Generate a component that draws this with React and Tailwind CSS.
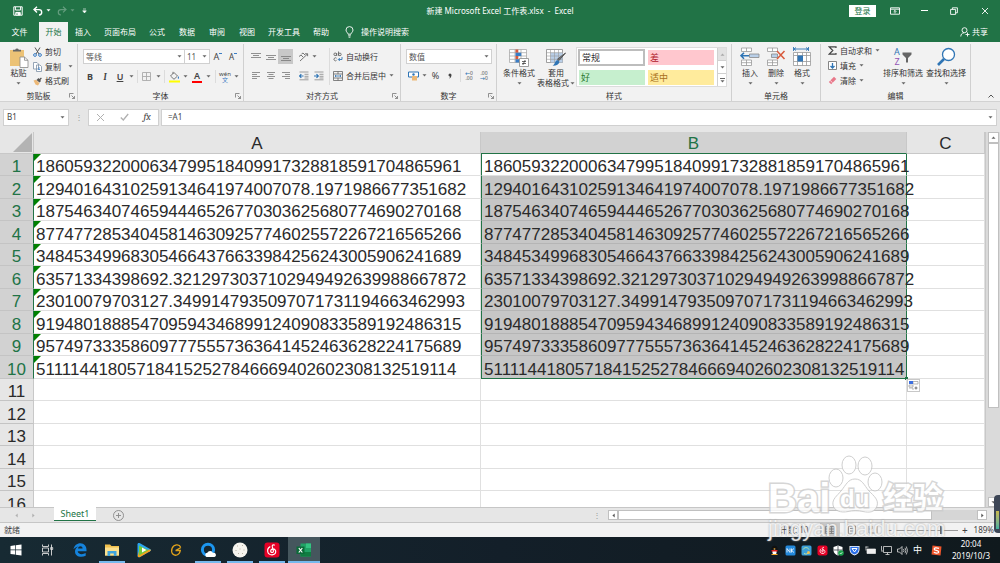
// ==============================
// File: src/App.jsx
// Role: 스프레드시트 창 (리본 / 수식 입력줄 / 시트 / 작업 표시줄)
// ==============================

const TABS = ["插入", "页面布局", "公式", "数据", "审阅", "视图", "开发工具", "帮助"];

const VALUES = [
  "186059322000634799518409917328818591704865961",
  "12940164310259134641974007078.1971986677351682",
  "187546340746594446526770303625680774690270168",
  "877477285340458146309257746025572267216565266",
  "348453499683054664376633984256243005906241689",
  "63571334398692.3212973037102949492639988667872",
  "23010079703127.3499147935097071731194663462993",
  "919480188854709594346899124090833589192486315",
  "957497333586097775557363641452463628224175689",
  "511114418057184152527846669402602308132519114",
];

const ROWS = Array.from({ length: 16 }, (_, i) => ({ n: i + 1, v: VALUES[i] }));

// ---------- 공통 ----------
function Caret({ className = "text-[#666]" }) {
  return (
    <svg width="5" height="3" viewBox="0 0 5 3" className={`shrink-0 ${className}`} aria-hidden="true">
      <path d="M0.5 0.3h4L2.5 2.6z" fill="currentColor" />
    </svg>
  );
}

function Group({ label, className = "", launcher = false, children }) {
  return (
    <section className={`flex h-[57px] shrink-0 flex-col border-r border-[#d0d0d0] ${className}`} aria-label={label}>
      <div className="flex h-[46px]">{children}</div>
      <div className="relative h-[11px] text-center leading-[11px]">
        {label}
        {launcher && (
          <button aria-label={`${label}设置`} className="absolute right-[2px] top-[3px]">
            <svg width="6" height="6" viewBox="0 0 6 6" fill="none" stroke="#777" strokeWidth="0.8" className="block">
              <path d="M0.5 4.5v-4h4M2.5 2.5l3 3M5.5 3v2.5H3" />
            </svg>
          </button>
        )}
      </div>
    </section>
  );
}

function Select({ label, value, className = "" }) {
  return (
    <span className={`relative flex h-[15px] items-center border border-[#d0d0d0] bg-white ${className}`}>
      <select aria-label={label} className="h-full w-full appearance-none bg-transparent pl-[2px] text-[8px] text-[#555] outline-none">
        <option>{value}</option>
      </select>
      <Caret className="pointer-events-none absolute right-[2px] text-[#666]" />
    </span>
  );
}

function BigButton({ icon, lines, className = "" }) {
  return (
    <button className={`flex shrink-0 flex-col items-center pt-[2px] ${className}`}>
      <span className="flex h-[22px] items-center">{icon}</span>
      <span className="h-[10px] whitespace-nowrap leading-[10px]">{lines[0]}</span>
      <span className="flex h-[10px] items-center gap-px whitespace-nowrap leading-[10px]">
        {lines[1]}
        <Caret />
      </span>
    </button>
  );
}

function Tool({ label, children, className = "w-[15px]" }) {
  return (
    <button aria-label={label} className={`flex h-[15px] shrink-0 items-center justify-center ${className}`}>
      {children}
    </button>
  );
}

function Divider({ className = "h-[13px]" }) {
  return <span className={`w-px shrink-0 bg-[#dcdcdc] ${className}`} />;
}

function Lines({ d }) {
  return (
    <svg width="10" height="10" viewBox="0 0 10 10" fill="none" stroke="#777" strokeWidth="0.8" aria-hidden="true">
      <path d={d} />
    </svg>
  );
}

// ---------- 제목 표시줄 + 탭 ----------
function TitleBar() {
  return (
    <header className="relative flex h-[21px] items-center justify-between pl-[13px] pr-[8px] text-white">
      <div className="flex items-center">
        <button aria-label="保存" className="w-[20px]">
          <svg width="10" height="10" viewBox="0 0 10 10" fill="none" stroke="white">
            <path d="M0.8 0.8h8.4v8.4H0.8zM2.4 1v3h5.2V1" />
            <path d="M2.8 9V6.4h4.4V9z" fill="white" />
            <path d="M4 7.4v1.4" stroke="#217346" />
          </svg>
        </button>
        <button aria-label="撤消" className="flex w-[24px] items-center gap-[3px]">
          <svg width="10" height="10" viewBox="0 0 10 10" fill="none" stroke="white" strokeWidth="1.4">
            <path d="M4 0.8L1 3.6L4 6.4M1.2 3.6H6a2.6 2.6 0 0 1 0 5.4" />
          </svg>
          <Caret className="text-white" />
        </button>
        <button aria-label="恢复" className="flex w-[25px] items-center gap-[3px] opacity-30">
          <svg width="10" height="10" viewBox="0 0 10 10" fill="none" stroke="white" strokeWidth="1.2">
            <path d="M6 0.8l3 2.8l-3 2.8M8.8 3.6H4a2.6 2.6 0 0 0 0 5.4" />
          </svg>
          <Caret className="text-white" />
        </button>
        <button aria-label="自定义快速访问工具栏">
          <svg width="5" height="6" viewBox="0 0 5 6" className="block">
            <path d="M1 1h3M0.7 2.8h3.6L2.5 5z" fill="white" stroke="white" strokeWidth="0.6" />
          </svg>
        </button>
      </div>
      <h1 className="pointer-events-none absolute inset-x-0 text-center">新建 Microsoft Excel 工作表.xlsx&nbsp; -&nbsp; Excel</h1>
      <div className="flex items-center">
        <button className="mr-[14px] h-[12px] w-[27px] bg-white leading-[12px] text-[#217346]">登录</button>
        <button aria-label="功能区显示选项" className="mr-[21px]">
          <svg width="10" height="8" viewBox="0 0 10 8" fill="none" stroke="white" strokeWidth="0.9" className="block">
            <path d="M0.5 0.8h9v6.4h-9zM0.5 2.2h9M5 6.4V3.6M3.7 4.7L5 3.4l1.3 1.3" />
          </svg>
        </button>
        <button aria-label="最小化" className="mr-[22px] h-px w-[7px] bg-white" />
        <button aria-label="还原" className="mr-[23px]">
          <svg width="8" height="8" viewBox="0 0 8 8" fill="none" stroke="white" strokeWidth="0.9" className="block">
            <path d="M0.6 2.4h5v5h-5zM2.4 2.4V0.8h5v5H5.6" />
          </svg>
        </button>
        <button aria-label="关闭" className="mr-[3px]">
          <svg width="8" height="8" viewBox="0 0 8 8" stroke="white" strokeWidth="0.9" className="block">
            <path d="M1 1l6 6M7 1L1 7" />
          </svg>
        </button>
      </div>
    </header>
  );
}

function TabBar() {
  return (
    <nav className="flex h-[21px] items-stretch text-white">
      <button className="w-[39px]">文件</button>
      <button className="mt-px w-[29px] bg-[#f2f2f2] text-[#217346]">开始</button>
      {TABS.map((t) => (
        <button key={t} className={t.length > 2 ? "w-[44px]" : "w-[30px]"}>
          {t}
        </button>
      ))}
      <button className="flex items-center gap-[7px] pl-[9px]">
        <svg width="9" height="12" viewBox="0 0 9 12" fill="none" stroke="white" strokeWidth="0.9">
          <path d="M3 8.2C3 6.8 1 6 1 4a3.5 3.4 0 0 1 7 0c0 2-2 2.8-2 4.2zM3.2 9.8h2.6M3.6 11.2h1.8" />
        </svg>
        操作说明搜索
      </button>
      <button className="ml-auto mr-[12px] flex items-center gap-[2px]">
        <svg width="10" height="10" viewBox="0 0 10 10" fill="none" stroke="white" strokeWidth="0.9">
          <circle cx="4.5" cy="3.2" r="2.5" />
          <path d="M0.8 9.5C0.8 7.5 2 5.8 4.2 5.8M7.5 5.5v4M5.5 7.5h4" />
        </svg>
        共享
      </button>
    </nav>
  );
}

// ---------- 리본 ----------
function PasteIcon() {
  return (
    <svg width="20" height="21" viewBox="0 0 20 21">
      <path d="M1 3h14v16H1z" fill="#ecc276" />
      <path d="M4 4.500V2.800h2.200a1.900 1.900 0 0 1 3.600 0H12v1.700z" fill="#666" />
      <path d="M11 10h4.500l3.500 3.300V20.500H11z" fill="white" stroke="#888" strokeWidth="0.8" />
      <path d="M15.500 10v3.300H19" fill="none" stroke="#888" strokeWidth="0.8" />
    </svg>
  );
}

function ClipboardGroup() {
  return (
    <Group label="剪贴板" launcher className="w-[78px]">
      <BigButton icon={<PasteIcon />} lines={["粘贴", ""]} className="ml-[7px] w-[23px]" />
      <div className="ml-[3px] flex flex-col justify-between pb-[2px] pt-px">
        <button className="flex h-[14px] items-center gap-[3px]">
          <svg width="9" height="10" viewBox="0 0 9 10" fill="none">
            <path d="M2 0.5l4 6.500M7 0.5L3 7" stroke="#555" />
            <circle cx="2" cy="8" r="1.4" stroke="#3b7dc4" />
            <circle cx="7" cy="8" r="1.4" stroke="#3b7dc4" />
          </svg>
          剪切
        </button>
        <button className="flex h-[14px] items-center gap-[3px]">
          <svg width="9" height="10" viewBox="0 0 9 10" fill="white" stroke="#7c8fa5" strokeWidth="0.8">
            <path d="M0.5 0.5h3.500l1.500 1.500v5h-5zM3.500 3h3.500l1.500 1.500v5h-5z" />
            <path d="M5 6h2M5 7.500h2" stroke="#3b7dc4" />
          </svg>
          复制
          <span className="w-px" />
          <Caret />
        </button>
        <button className="flex h-[14px] items-center gap-[3px]">
          <svg width="9" height="9" viewBox="0 0 9 9">
            <path d="M0.5 3.500l2.500-.8 3.500 3.500-1.500 2.300-2.500-1z" fill="#ecb877" />
            <path d="M3.500 3l2-2 .8 1L8 .5l.8.9L7.300 3l.7 1-1.500 1.500z" fill="#555" />
          </svg>
          格式刷
        </button>
      </div>
    </Group>
  );
}

function FontGroup() {
  return (
    <Group label="字体" launcher className="w-[166px]">
      <div className="flex flex-col gap-[5px] pl-[5px] pt-[5px]">
        <div className="flex items-center">
          <Select label="字体" value="等线" className="w-[102px]" />
          <Select label="字号" value="11" className="w-[25px] border-l-0" />
          <Tool label="增大字号" className="w-[16px] text-[9px] text-[#444]">
            A<span className="mb-[6px] h-px w-[3px] bg-[#3b7dc4]" />
          </Tool>
          <Tool label="减小字号" className="w-[14px] text-[8px] text-[#444]">
            A<span className="mb-[6px] h-px w-[3px] bg-[#3b7dc4]" />
          </Tool>
        </div>
        <div className="flex items-center text-[9px] text-[#444]">
          <Tool label="加粗" className="w-[14px]"><b>B</b></Tool>
          <Tool label="倾斜" className="w-[16px]"><i className="font-serif font-bold">I</i></Tool>
          <Tool label="下划线" className="w-[14px]"><u className="font-semibold">U</u></Tool>
          <Tool label="下划线选项" className="w-[8px]"><Caret /></Tool>
          <span className="w-[2px]" />
          <Divider />
          <Tool label="边框" className="w-[17px]">
            <svg width="9" height="9" viewBox="0 0 9 9" fill="none" stroke="#aaa" strokeWidth="0.9">
              <path d="M0.5 0.5h8v8h-8zM4.500 0.5v8M0.5 4.500h8" />
            </svg>
          </Tool>
          <Tool label="边框选项" className="w-[7px]"><Caret /></Tool>
          <span className="w-[2px]" />
          <Divider />
          <Tool label="填充颜色" className="w-[18px]">
            <svg width="11" height="12" viewBox="0 0 11 12" fill="none">
              <path d="M5 1.500L1.500 5L5 8.300L8.500 5zM4 3V0.8" stroke="#777" />
              <path d="M9.300 5c1 1.500 1 2.500.2 2.700s-1-.8-.2-2.700z" fill="#3b7dc4" />
              <path d="M0 9.500h11v2H0z" fill="#ff0" />
            </svg>
          </Tool>
          <Tool label="填充颜色选项" className="w-[5px]"><Caret /></Tool>
          <Tool label="字体颜色" className="w-[18px]">
            <span className="h-[13px] w-[10px] border-b-2 border-[#f00] text-center font-semibold leading-[11px]">A</span>
          </Tool>
          <Tool label="字体颜色选项" className="w-[5px]"><Caret /></Tool>
          <span className="w-[4px]" />
          <Divider />
          <Tool label="显示拼音" className="w-[18px]">
            <span className="flex flex-col text-[6px] leading-[6px]">
              <span>wén</span>
              <span className="text-[#3b7dc4]">文</span>
            </span>
          </Tool>
          <Tool label="拼音选项" className="w-[5px]"><Caret /></Tool>
        </div>
      </div>
    </Group>
  );
}

function IndentIcon({ flip = false }) {
  return (
    <svg width="10" height="10" viewBox="0 0 10 10" fill="none">
      <path d="M0.5 1h9M5.500 3.300h4M5.500 5.300h4M0.5 8.800h9M5.500 7h4" stroke="#888" strokeWidth="0.8" />
      <path d={flip ? "M0 5h4M2.500 3.200L4.300 5L2.500 6.800" : "M0.500 5h4M2.300 3.200L0.500 5l1.800 1.800"} stroke="#2f75b5" strokeWidth="1.2" />
    </svg>
  );
}

function AlignGroup() {
  return (
    <Group label="对齐方式" launcher className="w-[157px]">
      <div className="flex flex-col gap-[4px] pl-[4px] pt-[5px]">
        <div className="flex items-center">
          <Tool label="顶端对齐"><Lines d="M0 1.500h10M2 3.500h6M0 5.500h10" /></Tool>
          <Tool label="垂直居中"><Lines d="M0 3.500h10M2 5.500h6M0 7.500h10" /></Tool>
          <Tool label="底端对齐" className="w-[15px] bg-[#c8c8c8]"><Lines d="M0 4.500h10M2 6.500h6M0 8.500h10" /></Tool>
          <span className="w-[3px]" />
          <Tool label="方向" className="w-[14px]">
            <svg width="11" height="10" viewBox="0 0 11 10" fill="none" stroke="#666" strokeWidth="0.9">
              <path d="M2 9L9.500 2M7 1.800h2.600v2.400M1 4.500l2-1.500 2 2M3.500 2l1.500-1 2 2" />
            </svg>
          </Tool>
          <Tool label="方向选项" className="w-[8px]"><Caret /></Tool>
        </div>
        <div className="flex items-center">
          <Tool label="左对齐"><Lines d="M1 1.500h8M1 3.500h5M1 5.500h8M1 7.500h5" /></Tool>
          <Tool label="居中"><Lines d="M1 1.500h8M2.500 3.500h5M1 5.500h8M2.500 7.500h5" /></Tool>
          <Tool label="右对齐"><Lines d="M1 1.500h8M4 3.500h5M1 5.500h8M4 7.500h5" /></Tool>
          <span className="w-[3px]" />
          <Tool label="减少缩进量"><IndentIcon /></Tool>
          <Tool label="增加缩进量"><IndentIcon flip /></Tool>
        </div>
      </div>
      <span className="w-[3px]" />
      <Divider className="mt-[4px] h-[37px]" />
      <div className="flex flex-col gap-[4px] whitespace-nowrap pl-[3px] pt-[5px]">
        <button className="flex h-[15px] items-center gap-[3px]">
          <svg width="10" height="11" viewBox="0 0 10 11" fill="none" stroke="#666" strokeWidth="0.9">
            <circle cx="2.2" cy="3.3" r="1.3" />
            <path d="M3.700 2v3M5.500 0.5v4.300" />
            <circle cx="6.9" cy="3.4" r="1.3" />
            <path d="M3.500 7.200a1.500 1.500 0 1 0 0 2.200" />
            <path d="M9 6v2.500H5.500M6.800 7L5.300 8.500l1.500 1.500" stroke="#2f75b5" />
          </svg>
          自动换行
        </button>
        <button className="flex h-[15px] items-center gap-[3px]">
          <svg width="10" height="10" viewBox="0 0 10 10" fill="none" stroke="#666" strokeWidth="0.8" className="shrink-0">
            <path d="M0.5 0.5h9v9h-9zM0.5 3h9M0.5 7h9M5 0.5V3M5 7v2.500" />
            <path d="M2 5h6M3 4L2 5l1 1M7 4l1 1-1 1" stroke="#2f75b5" />
          </svg>
          合并后居中
          <Caret />
        </button>
      </div>
    </Group>
  );
}

function NumberGroup() {
  return (
    <Group label="数字" launcher className="w-[96px]">
      <div className="flex flex-col gap-[4px] pl-[5px] pt-[5px]">
        <Select label="数字格式" value="数值" className="w-[86px]" />
        <div className="flex items-center">
          <Tool label="会计数字格式" className="w-[14px]">
            <svg width="11" height="10" viewBox="0 0 11 10">
              <path d="M0.5 1h10v5h-10z" fill="white" stroke="#2f75b5" />
              <circle cx="5.5" cy="3.5" r="1.2" fill="#2f75b5" />
              <path d="M4 5h5v4.500H4z" fill="#ecb877" />
            </svg>
          </Tool>
          <Tool label="会计选项" className="w-[8px]"><Caret /></Tool>
          <Tool label="百分比样式" className="w-[15px] text-[9px] text-[#444]">%</Tool>
          <Tool label="千位分隔样式" className="w-[14px]">
            <svg width="4" height="6" viewBox="0 0 4 6"><path d="M0.5 2a1.500 1.500 0 1 1 3 0c0 1.500-.8 3-2.300 3.700.6-1 .8-1.500.6-2.200C1 3.500.5 2.700.5 2z" fill="#444" /></svg>
          </Tool>
          <span className="w-[3px]" />
          <Divider />
          <Tool label="增加小数位数" className="w-[16px] flex-col text-[5px] text-[#555]">
            <span className="leading-[5px]"><b className="text-[#2f75b5]">←</b>0</span>
            <span className="leading-[5px]">.00</span>
          </Tool>
          <Tool label="减少小数位数" className="w-[14px] flex-col text-[5px] text-[#555]">
            <span className="leading-[5px]">.00</span>
            <span className="leading-[5px]"><b className="text-[#2f75b5]">→</b>0</span>
          </Tool>
        </div>
      </div>
    </Group>
  );
}

function StylesGroup() {
  return (
    <Group label="样式" className="w-[235px]">
      <BigButton
        className="ml-[5px] w-[34px]"
        lines={["条件格式", ""]}
        icon={
          <svg width="20" height="19" viewBox="0 0 20 19" fill="none">
            <path d="M0.5 1.500h17v13h-17zM0.5 4.700h17M0.5 8h17M0.5 11.300h17M6 1.500v13M12 1.500v13" fill="white" stroke="#aaa" strokeWidth="0.8" />
            <path d="M6.500 1.500h2.800v3.200H6.500zM6.500 8h2.800v3.300H6.500z" fill="#d8593b" />
            <path d="M6.500 4.700h5.800V8H6.500zM6.500 11.300h3.800v3.200H6.500z" fill="#3b7dc4" />
            <path d="M10.500 10.500h9v8h-9z" fill="white" stroke="#888" strokeWidth="0.8" />
            <path d="M13 13.500h4M13 15.500h4M16.200 12l-2.400 5" stroke="#444" strokeWidth="0.8" />
          </svg>
        }
      />
      <BigButton
        className="w-[40px]"
        lines={["套用", "表格格式"]}
        icon={
          <svg width="20" height="19" viewBox="0 0 20 19" fill="none">
            <path d="M0.5 1.500h16v13h-16z" fill="white" stroke="#888" strokeWidth="0.8" />
            <path d="M4.500 4.700h12v9.800h-12z" fill="#b9cfe8" />
            <path d="M0.5 4.700h16M0.5 8h16M0.5 11.300h16M4.500 1.500v13M8.500 1.500v13M12.500 1.500v13" stroke="#999" strokeWidth="0.6" />
            <path d="M19.500 5L13 12.500l-1.500-1.300z" stroke="#555" fill="#777" />
            <path d="M11.500 12l2 1.800c-.6 3.200-3.500 4.200-7 4 2.500-1 2.200-5 5-5.800z" fill="#2f75b5" />
          </svg>
        }
      />
      <div className="mt-[3px] flex h-[40px] border border-[#dcdcdc] bg-white">
        <div className="grid grid-cols-2 gap-x-[3px] gap-y-[4px] p-px text-left text-[9px] leading-[15px]">
          <button className="h-[17px] w-[67px] border-2 border-[#bdbdbd] pl-[2px] text-left leading-[13px] text-[#333]">常规</button>
          <button className="h-[15px] w-[66px] self-center bg-[#ffc7ce] pl-[2px] text-left text-[#b0202c]">差</button>
          <button className="ml-px h-[15px] w-[66px] bg-[#c6efce] pl-[2px] text-left text-[#2a7a2e]">好</button>
          <button className="h-[15px] w-[66px] bg-[#ffeb9c] pl-[2px] text-left text-[#a8701a]">适中</button>
        </div>
        <div className="ml-px flex w-[9px] flex-col divide-y divide-[#d0d0d0] border-l border-[#d0d0d0]">
          <button aria-label="上一行" className="flex flex-1 items-center justify-center bg-[#e2e2e2]"><Caret className="rotate-180 text-[#aaa]" /></button>
          <button aria-label="下一行" className="flex flex-1 items-center justify-center"><Caret /></button>
          <button aria-label="其他" className="flex flex-1 flex-col items-center justify-center gap-px"><span className="h-px w-[5px] bg-[#666]" /><Caret /></button>
        </div>
      </div>
    </Group>
  );
}

function CellsGroup() {
  const grid = "M1.500 1h10v3.500h-10zM1.500 13h10v5.500h-10zM6.500 1v3.500M6.500 13v5.500M1.500 15.700h10";
  return (
    <Group label="单元格" className="w-[89px]">
      <BigButton
        className="ml-[5px] w-[26px]"
        lines={["插入", ""]}
        icon={
          <svg width="20" height="20" viewBox="0 0 20 20" fill="none">
            <path d={grid} fill="white" stroke="#999" strokeWidth="0.8" />
            <path d="M9.500 7h9.500v3.500H9.500z" fill="#b9cfe8" stroke="#888" strokeWidth="0.8" />
            <path d="M1 8.700h8M4 5.700L1 8.700l3 3" stroke="#2f75b5" strokeWidth="1.6" />
          </svg>
        }
      />
      <BigButton
        className="w-[26px]"
        lines={["删除", ""]}
        icon={
          <svg width="20" height="20" viewBox="0 0 20 20" fill="none">
            <path d={grid} fill="white" stroke="#999" strokeWidth="0.8" />
            <path d="M5.500 7h6v3.500h-6z" fill="#b9cfe8" stroke="#888" strokeWidth="0.8" />
            <path d="M11 4l7.500 8M18.500 4L11 12" stroke="#d8593b" strokeWidth="1.5" />
          </svg>
        }
      />
      <BigButton
        className="w-[26px]"
        lines={["格式", ""]}
        icon={
          <svg width="20" height="20" viewBox="0 0 20 20" fill="none">
            <path d="M1.500 2h15M1.500 0v4M16.500 0v4M4 0.5L2 2l2 1.500M14 0.5L16 2l-2 1.500" stroke="#2f75b5" strokeWidth="0.9" />
            <path d="M1.500 5.500h17v13h-17zM1.500 8.500h17M1.500 14.500h17M5.500 5.500v13M10.500 5.500v13M14.500 5.500v13" fill="white" stroke="#999" strokeWidth="0.8" />
            <path d="M5.500 8.500h5.500v6H5.500z" fill="#2f75b5" />
          </svg>
        }
      />
    </Group>
  );
}

function EditGroup() {
  return (
    <Group label="编辑" className="w-[150px]">
      <div className="flex w-[59px] shrink-0 flex-col justify-between pb-[3px] pl-[7px] whitespace-nowrap">
        <button className="flex h-[13px] items-center gap-[3px]">
          <svg width="9" height="9" viewBox="0 0 9 9" fill="none" stroke="#444" strokeWidth="1.2" className="shrink-0">
            <path d="M8 2V0.8H1.200L4.800 4.500L1.200 8.200H8V7" />
          </svg>
          自动求和
          <Caret />
        </button>
        <button className="flex h-[13px] items-center gap-[3px]">
          <svg width="9" height="9" viewBox="0 0 9 9" fill="none">
            <path d="M0.5 0.5h8v8h-8z" fill="white" stroke="#777" strokeWidth="0.9" />
            <path d="M4.500 2v5M2.500 5l2 2 2-2" stroke="#2f75b5" strokeWidth="1.3" />
          </svg>
          填充
          <Caret />
        </button>
        <button className="flex h-[13px] items-center gap-[3px]">
          <svg width="9" height="9" viewBox="0 0 9 9">
            <path d="M6 0.8L8.300 3L3.200 8.200L0.8 6z" fill="#e8788a" />
            <path d="M2.200 4.500l2.400 2.300" stroke="white" strokeWidth="0.7" />
          </svg>
          清除
          <Caret />
        </button>
      </div>
      <BigButton
        className="w-[46px]"
        lines={["排序和筛选", ""]}
        icon={
          <span className="flex items-center gap-[2px]">
            <span className="flex flex-col text-[9px] leading-[10px]">
              <span className="h-[10px] text-[#2f75b5]">A</span>
              <span className="h-[10px] text-[#9254b5]">Z</span>
            </span>
            <svg width="10" height="11" viewBox="0 0 10 11"><path d="M0.5 0.5h9v2L6 6v4.500H4V6L0.5 2.500z" fill="#666" /></svg>
          </span>
        }
      />
      <BigButton
        className="w-[40px]"
        lines={["查找和选择", ""]}
        icon={
          <svg width="20" height="20" viewBox="0 0 20 20" fill="none" stroke="#2f75b5">
            <circle cx="12.5" cy="7.5" r="6" strokeWidth="1.3" fill="white" />
            <path d="M8 12L2 18" strokeWidth="2.6" />
          </svg>
        }
      />
    </Group>
  );
}

function Ribbon() {
  return (
    <div className="flex h-[60px] border-b border-[#d2d2d2] bg-[#f2f2f2] pt-[2px] text-[#333]">
      <ClipboardGroup />
      <FontGroup />
      <AlignGroup />
      <NumberGroup />
      <StylesGroup />
      <CellsGroup />
      <EditGroup />
      <button aria-label="折叠功能区" className="ml-auto mr-[6px] mt-[49px] h-[6px]">
        <svg width="6" height="4" viewBox="0 0 6 4" fill="none" stroke="#555" className="block"><path d="M0.5 3.500L3 1l2.500 2.500" /></svg>
      </button>
    </div>
  );
}

function FormulaBar() {
  return (
    <div className="flex h-[30px] items-center pl-[3px] text-[#444]">
      <div className="flex h-[17px] w-[66px] items-center border border-[#d0d0d0] bg-white">
        <input aria-label="名称框" defaultValue="B1" className="w-[56px] bg-transparent pl-[3px] text-[8px] outline-none" />
        <Caret />
      </div>
      <span className="w-[19px] text-center text-[#999]">⋮</span>
      <div className="flex h-[17px] w-[71px] items-center justify-around border border-[#d0d0d0] bg-white">
        <button aria-label="取消">
          <svg width="9" height="9" viewBox="0 0 9 9" stroke="#b0b0b0" className="block"><path d="M1 1l7 7M8 1L1 8" /></svg>
        </button>
        <button aria-label="输入">
          <svg width="9" height="8" viewBox="0 0 9 8" fill="none" stroke="#b0b0b0" strokeWidth="1.3" className="block"><path d="M0.8 4.500L3.300 7L8.200 1" /></svg>
        </button>
        <button aria-label="插入函数" className="font-serif text-[10px] italic leading-[12px]">fx</button>
      </div>
      <div className="ml-[2px] flex h-[17px] flex-1 items-center border border-[#d0d0d0] bg-white pr-[3px]">
        <input aria-label="编辑栏" defaultValue="=A1" className="flex-1 bg-transparent pl-[6px] text-[8px] outline-none" />
        <Caret />
      </div>
      <span className="w-[3px]" />
    </div>
  );
}

// ---------- 시트 ----------
function Sheet() {
  return (
    <main className="flex min-h-0 flex-1 overflow-hidden">
      <div className="min-w-0 flex-1 overflow-hidden bg-white font-['Liberation_Sans','Noto_Sans_CJK_SC',sans-serif] text-[17px] text-[#2a2a2a]">
        <table className="w-full table-fixed border-separate border-spacing-0">
          <colgroup>
            <col className="w-[34px]" />
            <col className="w-[447px]" />
            <col className="w-[426px]" />
            <col />
          </colgroup>
          <thead>
            <tr className="h-[22px] bg-[#e6e6e6] leading-[18px]">
              <th className="border-b border-r border-[#c8c8c8] p-0" aria-label="全选">
                <svg width="20" height="19" viewBox="0 0 20 19" className="ml-auto block"><path d="M19 0v19H0z" fill="#b3b3b3" /></svg>
              </th>
              <th className="border-b border-r border-[#c8c8c8] p-0 pt-[3px] font-normal">A</th>
              <th className="border-b border-r border-b-[#217346] border-r-[#c8c8c8] bg-[#d2d2d2] p-0 pt-[3px] font-normal text-[#217346]">B</th>
              <th className="border-b border-r border-[#c8c8c8] p-0 pt-[3px] font-normal">C</th>
            </tr>
          </thead>
          <tbody>
            {ROWS.map(({ n, v }) => {
              const picked = n <= 10;
              return (
                <tr key={n} className="leading-[17px] odd:h-[22px] even:h-[23px]">
                  <th
                    scope="row"
                    className={`border-b border-r border-b-[#c4c4c4] p-0 pt-[4px] font-normal ${
                      picked ? "border-r-[#217346] bg-[#d2d2d2] text-[#217346]" : "border-r-[#c8c8c8] bg-[#e6e6e6]"
                    }`}
                  >
                    {n}
                  </th>
                  <td className="relative whitespace-nowrap border-b border-r border-[#e0e0e0] p-0 pl-[2px] pt-[4px]">
                    {v && (
                      <svg width="7" height="7" viewBox="0 0 7 7" className="absolute left-0 top-0"><path d="M0 0h7L0 7z" fill="#008000" /></svg>
                    )}
                    {v}
                  </td>
                  <td
                    className={`relative whitespace-nowrap border-b border-r p-0 pl-[2px] pt-[4px] ${
                      picked ? "border-l border-l-[#217346] border-r-[#217346]" : "border-r-[#e0e0e0]"
                    } ${n === 10 ? "border-b-[#217346]" : n > 1 && picked ? "border-b-[#b5b5b5]" : "border-b-[#e0e0e0]"} ${
                      picked && n > 1 ? "bg-[#c6c6c6]" : ""
                    }`}
                  >
                    {v}
                    {n === 10 && (
                      <>
                        <span className="absolute -bottom-[2px] -right-[2px] size-[3px] bg-[#217346]" />
                        <button aria-label="自动填充选项" className="absolute -right-[14px] top-[23px] flex size-[13px] items-center justify-center border border-[#c8c8c8] bg-white">
                          <svg width="11" height="11" viewBox="0 0 11 11" fill="none" stroke="#999" strokeWidth="0.7">
                            <path d="M5 1.500h5v2.500H5zM1 5h4v2H1zM1 8h4v2" />
                            <path d="M1 1h4v3H1z" fill="#3c6fe0" stroke="none" />
                            <path d="M8 6.500v3M6.500 8h3" stroke="#444" />
                          </svg>
                        </button>
                      </>
                    )}
                  </td>
                  <td className="border-b border-r border-[#e0e0e0] p-0" />
                </tr>
              );
            })}
          </tbody>
        </table>
      </div>
      {/* 세로 스크롤바 */}
      <div className="flex w-[15px] flex-col border-l border-[#c8c8c8] bg-[#dadada] pl-[2px] pr-px">
        <button aria-label="向上滚动" className="flex h-[11px] items-center justify-center border border-[#c0c0c0] bg-white"><Caret className="rotate-180 text-[#666]" /></button>
        <div className="h-[265px] border border-[#c0c0c0] bg-white" />
        <button aria-label="向下滚动" className="mt-auto flex h-[10px] items-center justify-center border border-[#c0c0c0] bg-white"><Caret /></button>
      </div>
    </main>
  );
}

function SheetTabs() {
  return (
    <div className="flex h-[16px] border-y border-[#c6c6c6] bg-[#e6e6e6]">
      <div className="flex w-[54px] items-center gap-[12px] pl-[14px] text-[#b0b0b0]">
        <button aria-label="上一个工作表"><Caret className="rotate-90" /></button>
        <button aria-label="下一个工作表"><Caret className="-rotate-90" /></button>
      </div>
      <button className="-mt-px h-[14px] w-[42px] border-b border-[#217346] bg-white text-[9px] leading-[12px] text-[#217346]">Sheet1</button>
      <button aria-label="新工作表" className="ml-[17px]">
        <svg width="11" height="11" viewBox="0 0 11 11" fill="none" stroke="#888" strokeWidth="0.9"><circle cx="5.5" cy="5.5" r="5" /><path d="M5.500 3v5M3 5.500h5" /></svg>
      </button>
      <span className="ml-auto leading-[14px] text-[#999]">⋮</span>
      <div className="ml-[7px] mt-[2px] flex h-[10px] w-[379px] bg-[#d6d6d6]">
        <button aria-label="向左滚动" className="flex w-[10px] items-center justify-center border border-[#c0c0c0] bg-white"><Caret className="rotate-90 text-[#555]" /></button>
        <div className="w-[314px] border border-[#c0c0c0] bg-white" />
        <button aria-label="向右滚动" className="ml-auto flex w-[10px] items-center justify-center border border-[#c0c0c0] bg-white"><Caret className="-rotate-90 text-[#555]" /></button>
      </div>
      <span className="w-[13px]" />
    </div>
  );
}

function StatusBar() {
  return (
    <footer className="flex h-[14px] items-center bg-[#f2f2f2] pl-[4px] pr-[6px] text-[#444]">
      <span>就绪</span>
      <span className="ml-auto mr-[12px]">计数: 10</span>
      <button aria-label="普通" className="flex h-full w-[20px] items-center justify-center bg-[#c8c8c8]"><Lines d="M0.5 1.500h9v7h-9zM0.5 4h9M0.5 6.500h9M3.500 1.500v7M6.500 1.500v7" /></button>
      <button aria-label="页面布局" className="flex w-[23px] justify-center"><Lines d="M1.500 1h7v8h-7zM3 3.500h4M3 6h4" /></button>
      <button aria-label="分页预览" className="mr-[4px] flex w-[20px] justify-center"><Lines d="M1 1v7h8V1M1 4h3V1" /></button>
      <span>−</span>
      <input
        type="range"
        aria-label="缩放"
        defaultValue="75"
        className="mx-[4px] h-px w-[62px] appearance-none bg-[#999] [&::-webkit-slider-thumb]:h-[8px] [&::-webkit-slider-thumb]:w-[3px] [&::-webkit-slider-thumb]:appearance-none [&::-webkit-slider-thumb]:bg-[#666]"
      />
      <span className="mr-[6px] text-[10px]">+</span>
      <span>189%</span>
    </footer>
  );
}

// ---------- 작업 표시줄 ----------
const APPS = [
  {
    name: "开始菜单",
    icon: <path d="M2.500 4l4.500-.7V7.600H2.500zM7.700 3.200L13.500 2.400v5.200H7.700zM2.500 8.300H7v4.300l-4.500-.7zM7.700 8.300h5.800v5.200L7.700 12.700z" fill="white" />,
  },
  {
    name: "任务视图",
    icon: <path d="M2.500 2.500v2h6v-2M2.500 13.500v-2h6v2M2.500 6h6v4h-6zM11.500 2.500v11M10.700 5.500h2v2h-2z" fill="none" stroke="#ddd" strokeWidth="0.9" />,
  },
  {
    name: "Edge",
    icon: <path d="M1.500 7.300C2.200 3.500 5 1.300 8.300 1.300c4 0 6.200 3 6.200 6.700v1.300H5.700c.2 3 4.800 3.700 8 1.700v2.800c-4.400 2.200-10.700 1-10.700-4.400 0-2.300 1.200-4 3.200-5C3.800 5 2.500 6 1.500 7.300zM6 6.500h4.600c0-3-4.200-3-4.600 0z" fill="#1583dc" />,
  },
  {
    name: "文件资源管理器",
    open: true,
    icon: (
      <>
        <path d="M1 2.500h5l1.500 1.500H15v9.500H1z" fill="#f0c04e" />
        <path d="M1 5.500h14v8H1z" fill="#fce08e" />
        <path d="M3.500 14V9h9v5h-2.700v-2.500H6.200V14z" fill="#3fa3dc" />
      </>
    ),
  },
  {
    name: "腾讯视频",
    icon: (
      <>
        <path d="M1.500 2.500C1.500 1 2.500.5 4 1.300L14 7c1.300.8 1.300 1.500 0 2.300L4 15c-1.500.7-2.500 0-2.500-1.500z" fill="#2ba5ee" />
        <path d="M3 9L14.500 7.500c.5.7.3 1.200-.5 1.800L4 15c-1 .5-2 .2-2.300-.7z" fill="#f9a01b" />
        <path d="M3 3.500L12.500 8.200L3 13.500z" fill="#73cb3b" />
        <path d="M6 5.500L10.500 8L6 10.500z" fill="white" />
      </>
    ),
  },
  {
    name: "加速器",
    icon: <path d="M12.500 5C11.500 2 5.500 2 4 6.500c-1.500 5 2 7.500 5 6.500 2.300-.7 3-2.500 3.300-4.500H7.500M7.500 8.500L13 5.500" fill="none" stroke="#e2a31b" strokeWidth="1.3" />,
  },
  {
    name: "QQ浏览器",
    open: true,
    icon: (
      <>
        <circle cx="8" cy="7.8" r="5.6" fill="none" stroke="#1c96f0" strokeWidth="3" />
        <path d="M6.500 15a2.300 2.300 0 0 1 .8-4.300 3.200 3.200 0 0 1 5.700.3 2 2 0 0 1 1.500 4z" fill="white" />
      </>
    ),
  },
  {
    name: "曲奇",
    open: true,
    icon: (
      <>
        <circle cx="8" cy="8" r="7.5" fill="#f6f4ee" />
        <path d="M5 4h1M10 3.500h1M7.500 7h1M3.500 8.500h1M11.500 8h1M6 11.500h1M10 11.500h1" stroke="#b9b3a2" />
      </>
    ),
  },
  {
    name: "网易云音乐",
    open: true,
    icon: (
      <>
        <rect x="0.5" y="0.5" width="15" height="15" rx="3" fill="#e60026" />
        <path d="M10.800 3.200c-1.800-1-2.800.2-2.500 1.500l1.100 4.200c.3 2-2.700 2.200-2.700.2 0-1.400 1-2.200 2.400-2.200 3.400 0 3.900 5.600-1 5.900-5.300.2-5.800-6.300-1.800-8.200" fill="none" stroke="white" strokeWidth="1.200" />
      </>
    ),
  },
  {
    name: "Excel",
    open: true,
    active: true,
    icon: (
      <>
        <path d="M4.500 1.500H15v13H4.500z" fill="#21a366" />
        <path d="M10 1.500h5v4.500h-5z" fill="#33c481" />
        <path d="M4.500 10H15v4.500H4.500z" fill="#107c41" />
        <path d="M0.5 4.500h8v7.500h-8z" fill="#0b6b38" />
        <path d="M2.800 6l3.500 4.500M6.300 6l-3.500 4.500" stroke="white" strokeWidth="1.2" />
      </>
    ),
  },
];

const TRAY = [
  {
    name: "QQ",
    icon: (
      <>
        <ellipse cx="5.5" cy="5" rx="3.2" ry="4.2" fill="#111" />
        <ellipse cx="5.5" cy="7" rx="2.2" ry="2.6" fill="white" />
        <path d="M2.500 5h6v1.500h-6z" fill="#e02020" />
        <path d="M2.500 9.500h6M4.700 3.800h1.600" stroke="#f5a623" />
      </>
    ),
  },
  {
    name: "NK",
    icon: (
      <>
        <rect x="0.5" y="0.5" width="10" height="10" rx="1.5" fill="#2389dc" />
        <path d="M2 7.500v-4l3 4v-4M6.500 3.500v4M9 3.500l-2.300 2L9 7.500" fill="none" stroke="white" strokeWidth="0.8" />
      </>
    ),
  },
  {
    name: "控制面板",
    icon: (
      <>
        <rect x="0.5" y="0.5" width="10" height="10" rx="1.5" fill="#3d9fd8" />
        <path d="M2 4.500c2-3 5-2 6 0M3 8.500c2 1 4 .5 5-1.500" fill="none" stroke="#bfe5a0" />
        <circle cx="7.5" cy="7.5" r="1.5" fill="#f0c04e" />
      </>
    ),
  },
  {
    name: "网易云音乐托盘",
    icon: (
      <>
        <rect x="0.5" y="0.5" width="10" height="10" rx="2" fill="#e60026" />
        <path d="M7 2.500c-1.500-.5-1.500.5-1.300 1.300l.5 2c.2 1.300-1.500 1.300-1.500.2 0-2 3.500-1.500 3.300.7C7.700 9.500 3 9 3 6c0-1.200.6-2 1.300-2.400" fill="none" stroke="white" strokeWidth="0.8" />
      </>
    ),
  },
  {
    name: "安全中心",
    icon: (
      <>
        <path d="M5 0.5l4.500 1.500v3.500C9.500 8 7.500 9.500 5 10.500 2.500 9.500.5 8 .5 5.500V2z" fill="white" />
        <path d="M5 1v9M0.5 5h9" stroke="#17232b" strokeWidth="0.7" />
        <circle cx="8" cy="8" r="2.8" fill="#1aa34a" />
        <path d="M6.800 8l1 1 1.500-1.800" fill="none" stroke="white" strokeWidth="0.7" />
      </>
    ),
  },
  {
    name: "电脑管家",
    icon: (
      <>
        <path d="M0.5 1h10v3.500c0 3-2 5-5 6-3-1-5-3-5-6z" fill="white" />
        <path d="M1.300 1.800h8.400v2.700c0 2.500-1.700 4.200-4.200 5.100-2.500-.9-4.200-2.600-4.200-5.100z" fill="#2a6fe8" />
        <path d="M3 3.500h5L5.500 7z" fill="none" stroke="white" />
      </>
    ),
  },
  { name: "电源", icon: <path d="M0.5 2h3M1 1.500v2.500M2 4h8.500v4.500H2zM1 4v1.500" fill="#eee" stroke="#eee" strokeWidth="0.7" /> },
  { name: "网络", icon: <path d="M2.500 1.500h8v6h-8zM4.500 9.500h4M6.500 7.500v2M0.5 1v4.500M0 6h2" fill="none" stroke="#ddd" strokeWidth="0.8" /> },
  { name: "音量", icon: <path d="M0.5 4h2L5 1.500v8L2.500 7h-2zM6.500 4q1 1.500 0 3M8 2.800q1.800 2.700 0 5.400M9.300 1.500q2.500 4 0 8" fill="none" stroke="#ddd" strokeWidth="0.8" /> },
];

function Taskbar() {
  return (
    <div className="flex h-[26px] items-stretch bg-gradient-to-r from-[#172a33] via-[#131f29] to-[#10191d] text-white">
      {APPS.map((a) => (
        <button
          key={a.name}
          aria-label={a.name}
          className={`flex w-[32px] flex-col items-center justify-between pt-[5px] ${a.active ? "bg-[#45565d]" : ""}`}
        >
          <svg width="16" height="16" viewBox="0 0 16 16">{a.icon}</svg>
          <span className={`h-[2px] ${a.active ? "w-full" : "w-[26px]"} ${a.open ? "bg-[#76b9ed]" : ""}`} />
        </button>
      ))}
      <div className="ml-auto flex items-center gap-[5px]">
        {TRAY.map((t) => (
          <button key={t.name} aria-label={t.name}>
            <svg width="11" height="11" viewBox="0 0 11 11" className="block">{t.icon}</svg>
          </button>
        ))}
        <button className="text-[9px]">中</button>
        <button aria-label="搜狗输入法" className="ml-[4px]">
          <svg width="11" height="11" viewBox="0 0 11 11" className="block">
            <path d="M1.500 0.5l9 1-1 9-9-1z" fill="#f0562b" />
            <path d="M8 3.300C5 2.300 3 3 3.300 4.300S8 5.300 7.700 7 4.500 8.200 2.800 7.300" fill="none" stroke="white" strokeWidth="1.3" />
          </svg>
        </button>
      </div>
      <div className="flex w-[58px] flex-col justify-center text-center text-[8px] leading-[12px]">
        <time>20:04</time>
        <time>2019/10/3</time>
      </div>
    </div>
  );
}

// ---------- 워터마크 ----------
function Watermark() {
  const outlined = "absolute font-bold text-white [-webkit-text-stroke:3px_#cccccc] [paint-order:stroke_fill]";
  return (
    <div className="pointer-events-none absolute bottom-[20px] right-[54px] h-[88px] w-[178px] font-['Liberation_Sans','Noto_Sans_CJK_SC',sans-serif]">
      <div className="opacity-80">
        <span className={`${outlined} left-0 top-[23px] text-[40px] leading-[40px]`}>Bai</span>
        <svg width="58" height="58" viewBox="0 0 58 58" className="absolute left-[60px] top-0" fill="white" stroke="#c4c4c4">
          <ellipse cx="8" cy="23" rx="7" ry="9" />
          <ellipse cx="21" cy="10" rx="7" ry="9" />
          <ellipse cx="37" cy="11" rx="7" ry="9" />
          <ellipse cx="47" cy="27" rx="7" ry="9" />
          <path d="M27 24c7 0 9 6 14 12 5 5 10 9 8 15-2 6-7 7-14 5.500-5-1-10-1-15 0C13 58 6 56 5 50c-1-6 4-9 8-14 5-6 7-12 14-12z" />
        </svg>
        <span className={`${outlined} left-[72px] top-[31px] text-[24px] leading-[26px]`}>du</span>
        <span className={`${outlined} left-[115px] top-[26px] text-[30px] leading-[34px]`}>经验</span>
      </div>
      <span className="absolute left-0 top-[62px] whitespace-nowrap text-[22px] leading-[24px] text-white/80 [text-shadow:0_0_2px_#999]">jingyan.baidu.com</span>
    </div>
  );
}

export default function App() {
  return (
    <div className="relative flex h-screen flex-col overflow-hidden bg-[#e6e6e6] font-['Noto_Sans','Noto_Sans_CJK_SC',sans-serif] text-[8px] leading-[12px]">
      <div className="bg-[#217346]">
        <TitleBar />
        <TabBar />
      </div>
      <Ribbon />
      <FormulaBar />
      <Sheet />
      <SheetTabs />
      <StatusBar />
      <Taskbar />
      <Watermark />
      {/* 오른쪽 가장자리 위젯 */}
      <div className="absolute bottom-[30px] right-0 flex h-[38px] w-[6px] flex-col justify-end rounded-l bg-[#3d4656] pb-[4px] pl-[2px]">
        <span className="h-[18px] w-[3px] bg-gradient-to-b from-[#c8b84a] to-[#3fb0a0]" />
      </div>
    </div>
  );
}
